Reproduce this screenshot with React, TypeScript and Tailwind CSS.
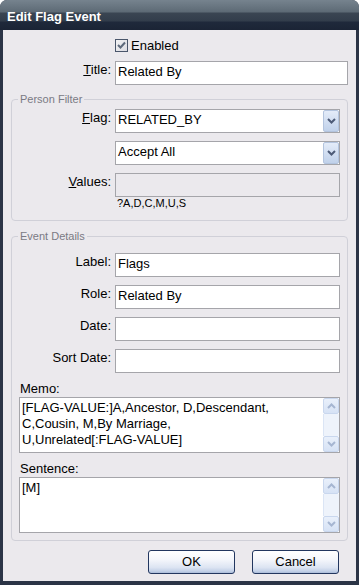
import React from 'react';

const FONT = "[font-family:'Liberation_Sans',Arial,sans-serif]";

function Label({ children, w }: { children: React.ReactNode; w: string }) {
  return <div className={`${w} shrink-0 pt-[1px] text-right`}>{children}</div>;
}

function TextBox({ value, muted }: { value?: string; muted?: boolean }) {
  return (
    <div
      className={`h-[24px] flex-1 border border-[#a5a5aa] pl-[2px] pt-[2px] whitespace-nowrap ${
        muted ? 'bg-[#ebe9ed]' : 'bg-white'
      }`}
    >
      {value}
    </div>
  );
}

function Chevron({ up, color }: { up?: boolean; color: string }) {
  return (
    <svg width="9" height="6" viewBox="0 0 9 6">
      <polyline
        points={up ? '1,5 4.5,1.5 8,5' : '1,1 4.5,4.5 8,1'}
        fill="none"
        stroke={color}
        strokeWidth="2"
      />
    </svg>
  );
}

function Combo({ value }: { value: string }) {
  return (
    <div className="flex h-[24px] flex-1 border border-[#a5a5aa] bg-white">
      <div className="flex-1 pl-[2px] pt-[2px]">{value}</div>
      <div className="flex w-[16px] items-center justify-center rounded-[2px] border border-[#b3c4de] bg-[linear-gradient(to_bottom,#e4ecf9,#c0d1ea)]">
        <Chevron color="#4d5b77" />
      </div>
    </div>
  );
}

function ScrollBtn({ up }: { up?: boolean }) {
  return (
    <div className="flex h-[16px] items-center justify-center rounded-[2px] border border-[#c9d7ee] bg-[linear-gradient(to_bottom,#e9f0fb,#d6e2f5)]">
      <Chevron up={up} color="#a6b6d2" />
    </div>
  );
}

function Memo({ lines }: { lines: string[] }) {
  return (
    <div className="flex h-[56px] border border-[#a5a5aa] bg-white">
      <div className="flex-1 pl-[2px] pt-[2px]">
        {lines.map(l => (
          <div key={l} className="whitespace-pre">{l}</div>
        ))}
      </div>
      <div className="flex w-[16px] flex-col">
        <ScrollBtn up />
        <div className="flex-1 border-l border-[#dbe5f5] bg-[#eef3fb]" />
        <ScrollBtn />
      </div>
    </div>
  );
}

function Button({ children }: { children: React.ReactNode }) {
  return (
    <button className="h-[24px] w-[87px] rounded-[3px] border border-[#22365f] bg-[linear-gradient(to_bottom,#ffffff_0%,#f4f6fb_40%,#dce4f2_75%,#c2d0e7_92%,#a9bbd8_100%)] text-center leading-[16px]">
      {children}
    </button>
  );
}

export default function App() {
  return (
    <div className={`h-[585px] w-[359px] bg-white text-[13px] leading-[16px] text-black ${FONT}`}>
      <div className="flex h-full flex-col overflow-hidden rounded-t-[7px] bg-[#2b3446]">
        {/* Title bar */}
        <div className="h-[30px] shrink-0 bg-[linear-gradient(to_bottom,#76838e_0px,#5d6a75_12px,#3a4552_13px,#323d4b_21px,#1f293b_22px,#1b2435_30px)] pl-[7px] pt-[9px] font-bold text-white">
          Edit Flag Event
        </div>

        {/* Dialog body */}
        <div className="mx-[3px] mb-[4px] flex flex-1 flex-col bg-[#ebe9ed] px-[8px] pt-[9px]">
          <div className="flex h-[13px] items-center pl-[104px]">
            <div className="flex h-[13px] w-[13px] items-center justify-center border border-[#4a566b] bg-[linear-gradient(to_bottom_right,#f2f2f4,#dcdce2)]">
              <svg width="9" height="9" viewBox="0 0 9 9">
                <polyline points="1,4 3.5,6.5 8,1.5" fill="none" stroke="#5e6a7c" strokeWidth="2" />
              </svg>
            </div>
            <span className="ml-[3px]">Enabled</span>
          </div>

          <div className="mt-[9px] flex gap-[4px]">
            <Label w="w-[100px]"><u>T</u>itle:</Label>
            <TextBox value="Related By" />
          </div>

          {/* Person Filter */}
          <fieldset className="mt-[7px] rounded-[4px] border border-[#d0d0d8] pt-[3px] pr-[7px] pb-[10px]">
            <legend className="ml-[6px] px-[2px] text-[11px] leading-[14px] text-[#7a7a84]">Person Filter</legend>
            <div className="flex gap-[4px]">
              <Label w="w-[99px]"><u>F</u>lag:</Label>
              <Combo value="RELATED_BY" />
            </div>
            <div className="mt-[8px] flex gap-[4px]">
              <div className="w-[99px] shrink-0" />
              <Combo value="Accept All" />
            </div>
            <div className="mt-[8px] flex gap-[4px]">
              <Label w="w-[99px]"><u>V</u>alues:</Label>
              <TextBox muted />
            </div>
            <div className="ml-[103px] pl-[2px] text-[11px] leading-[13px]">?A,D,C,M,U,S</div>
          </fieldset>

          {/* Event Details */}
          <fieldset className="mt-[8px] rounded-[4px] border border-[#d0d0d8] pt-[10px] pr-[7px] pb-[7px]">
            <legend className="ml-[6px] px-[2px] text-[11px] leading-[14px] text-[#7a7a84]">Event Details</legend>
            {[
              ['Label:', 'Flags'],
              ['Role:', 'Related By'],
              ['Date:', ''],
              ['Sort Date:', ''],
            ].map(([label, value], i) => (
              <div key={label} className={`flex gap-[4px] ${i > 0 ? 'mt-[8px]' : ''}`}>
                <Label w="w-[99px]">{label}</Label>
                <TextBox value={value} />
              </div>
            ))}
            <div className="ml-[7px]">
              <div className="mt-[8px] pl-[1px]">Memo:</div>
              <Memo
                lines={[
                  '[FLAG-VALUE:]A,Ancestor, D,Descendant,',
                  'C,Cousin, M,By Marriage,',
                  'U,Unrelated[:FLAG-VALUE]',
                ]}
              />
              <div className="mt-[8px] pl-[1px]">Sentence:</div>
              <Memo lines={['[M]']} />
            </div>
          </fieldset>

          <div className="mt-[9px] flex justify-end gap-[17px] pr-[9px]">
            <Button>OK</Button>
            <Button>Cancel</Button>
          </div>
        </div>
      </div>
    </div>
  );
}
